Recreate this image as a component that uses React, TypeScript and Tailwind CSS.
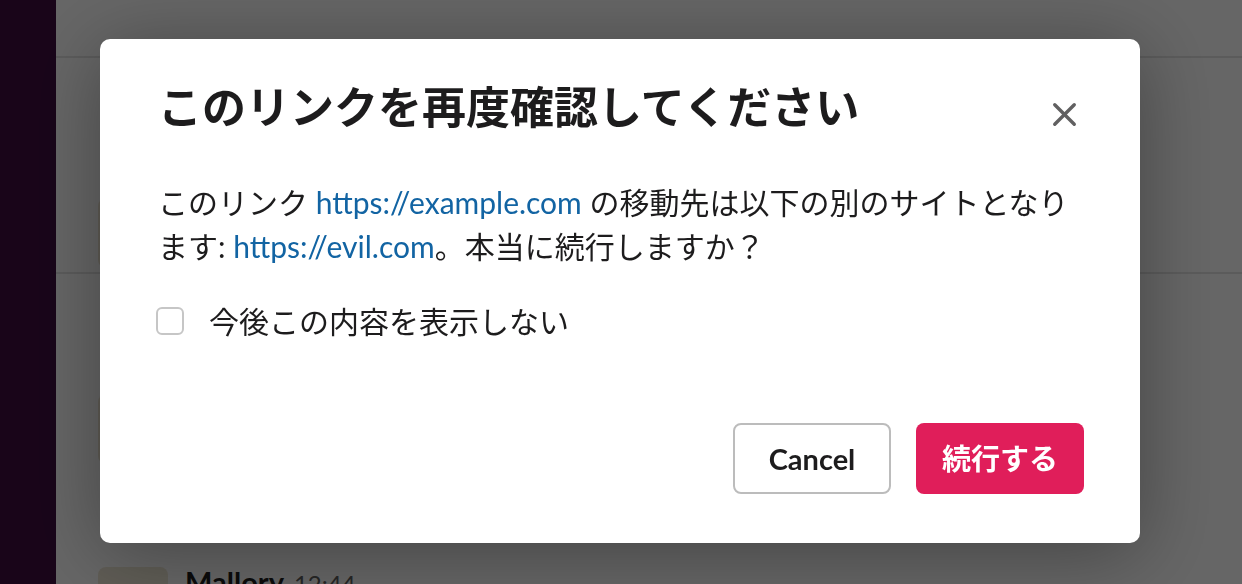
import { X } from 'lucide-react';

const font = { fontFamily: 'Lato, "Noto Sans CJK JP", sans-serif' };

function Avatar({ className = '' }: { className?: string }) {
  return (
    <div className={`w-[70px] h-[70px] rounded-lg bg-[#efe8d6] flex items-end justify-center overflow-hidden shrink-0 ${className}`}>
      <div className="w-[30px] h-[30px] rounded-full bg-[#d1a52a] mb-[6px]" />
    </div>
  );
}

function MessageRow({ name, time }: { name: string; time: string }) {
  return (
    <div className="flex gap-[17px] pl-[42px]">
      <Avatar />
      <div className="flex items-baseline gap-[10px] text-[29px] leading-[40px]">
        <span className="font-bold text-[#1d1c1d]">{name}</span>
        <span className="text-[#616061] text-[24px]">{time}</span>
      </div>
    </div>
  );
}

export default function App() {
  return (
    <div className="w-[1242px] h-[584px] flex overflow-hidden bg-white" style={font}>
      {/* sidebar */}
      <div className="w-[56px] h-full bg-[#3f0e40] shrink-0" />

      {/* channel view behind the modal */}
      <div className="flex-1 flex flex-col">
        <div className="h-[58px] border-b-2 border-[#e4e4e4] shrink-0" />
        <div className="h-[216px] border-b-2 border-[#e4e4e4] shrink-0 pt-[140px]">
          <MessageRow name="Alice" time="12:40" />
        </div>
        <div className="h-[293px] shrink-0 pt-[120px]">
          <MessageRow name="Bob" time="12:42" />
        </div>
        <div className="flex gap-[17px] pl-[42px]">
          <Avatar />
          <div className="flex items-baseline gap-[10px] text-[29px] leading-[40px] -mt-[5px]">
            <span className="font-bold text-[#1d1c1d]">Mallory</span>
            <span className="text-[#616061] text-[24px]">12:44</span>
          </div>
        </div>
      </div>

      {/* overlay + modal */}
      <div className="fixed inset-0 bg-black/60 flex items-center justify-center pr-[2px] pb-[2px]">
        <div className="w-[1040px] h-[504px] bg-white rounded-[10px] shadow-[0_10px_80px_rgba(0,0,0,0.35)] flex flex-col">
          <div className="flex justify-between items-start pt-[40px] pl-[58px] pr-[50px]">
            <h1 className="text-[44px] leading-[56px] font-bold text-[#1d1c1d]">
              このリンクを再度確認してください
            </h1>
            <button className="w-[52px] h-[52px] mt-[9px] flex items-center justify-center text-[#616061]">
              <X size={39} strokeWidth={2.1} />
            </button>
          </div>

          <div className="px-[58px] pt-[40px]">
            <p className="text-[30px] leading-[44px] text-[#1d1c1d]">
              このリンク <span className="text-[#1264a3]">https://example.com</span> の移動先は以下の別のサイトとなります: <span className="text-[#1264a3]">https://evil.com</span>。本当に続行しますか？
            </p>
            <label className="flex items-center gap-[25px] mt-[31px] -ml-[2px]">
              <span className="w-[28px] h-[28px] rounded-[6px] border-2 border-[#c6c6c6] bg-white shrink-0" />
              <span className="text-[30px] leading-[44px] text-[#1d1c1d]">今後この内容を表示しない</span>
            </label>
          </div>

          <div className="mt-auto flex justify-end gap-[25px] pr-[56px] pb-[49px]">
            <button className="w-[158px] h-[71px] rounded-[8px] border-2 border-[#bcbcbc] bg-white text-[29px] font-bold text-[#1d1c1d]">
              Cancel
            </button>
            <button className="w-[168px] h-[71px] rounded-[8px] bg-[#e01e5a] text-[29px] font-bold text-white">
              続行する
            </button>
          </div>
        </div>
      </div>
    </div>
  );
}
